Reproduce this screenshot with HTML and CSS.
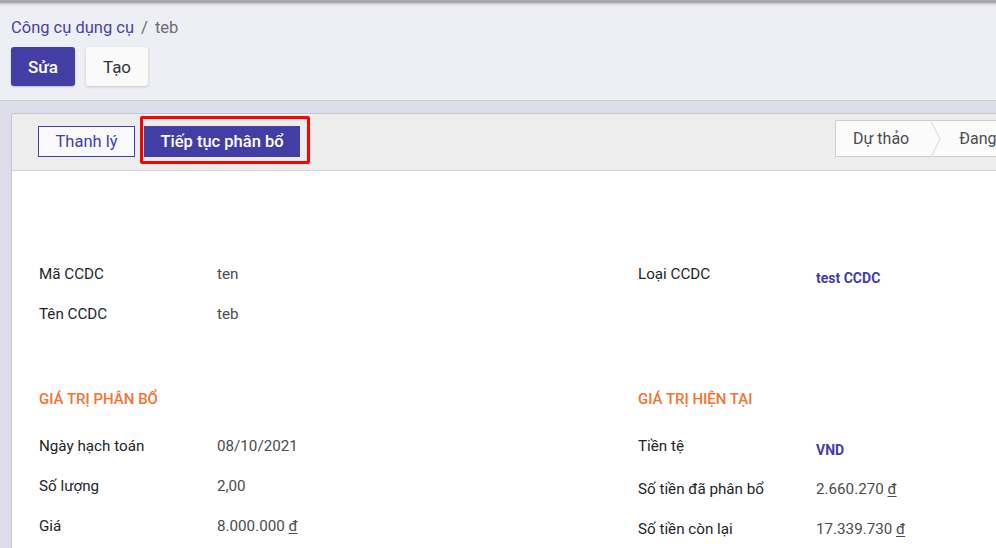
FILE: index.html
```html
<!DOCTYPE html>
<html lang="vi">
<head>
<meta charset="utf-8">
<title>Công cụ dụng cụ / teb</title>
<link rel="stylesheet" href="styles.css">
</head>
<body>
<div class="app">
  <div class="control-panel">
    <div class="breadcrumb"><a class="crumb-link">Công cụ dụng cụ</a><span class="crumb-sep">/</span><span class="crumb-active">teb</span></div>
    <div class="cp-buttons">
      <button class="btn btn-primary">Sửa</button>
      <button class="btn btn-secondary">Tạo</button>
    </div>
  </div>
  <div class="content">
    <div class="sheet">
      <div class="statusbar">
        <div class="sb-buttons">
          <button class="sb-btn sb-btn-outline">Thanh lý</button>
          <button class="sb-btn sb-btn-fill highlighted">Tiếp tục phân bổ</button>
        </div>
        <div class="sb-status">
          <span class="stage">Dự thảo</span>
          <span class="stage">Đang sử dụng</span>
          <span class="stage">Đã phân bổ xong</span>
        </div>
      </div>
      <div class="form">
        <div class="col">
          <div class="group top-group">
            <div class="row"><span class="lbl">Mã CCDC</span><span class="val">ten</span></div>
            <div class="row"><span class="lbl">Tên CCDC</span><span class="val">teb</span></div>
          </div>
          <h3 class="sec-title">Giá trị phân bổ</h3>
          <div class="group">
            <div class="row"><span class="lbl">Ngày hạch toán</span><span class="val">08/10/2021</span></div>
            <div class="row"><span class="lbl">Số lượng</span><span class="val">2,00</span></div>
            <div class="row"><span class="lbl">Giá</span><span class="val">8.000.000 <u>đ</u></span></div>
          </div>
        </div>
        <div class="col">
          <div class="group top-group">
            <div class="row"><span class="lbl">Loại CCDC</span><span class="val link">test CCDC</span></div>
            <div class="row"></div>
          </div>
          <h3 class="sec-title">Giá trị hiện tại</h3>
          <div class="group">
            <div class="row row-tall"><span class="lbl">Tiền tệ</span><span class="val link">VND</span></div>
            <div class="row"><span class="lbl">Số tiền đã phân bổ</span><span class="val">2.660.270 <u>đ</u></span></div>
            <div class="row"><span class="lbl">Số tiền còn lại</span><span class="val">17.339.730 <u>đ</u></span></div>
          </div>
        </div>
      </div>
    </div>
  </div>
</div>
</body>
</html>
```

FILE: styles.css
```css
* { box-sizing: border-box; }
html, body { margin: 0; padding: 0; }
body {
  font-family: Roboto, "Noto Sans", "Liberation Sans", sans-serif;
  background: #dcdde9;
  overflow: hidden;
  width: 996px;
  height: 548px;
}
.app { width: 996px; height: 548px; overflow: hidden; }

.control-panel {
  background: #eeeff5;
  border-top: 3px solid #a9a9ad;
  border-bottom: 1px solid #cfd0dc;
  height: 101px;
  padding: 14px 11px 0;
  position: relative;
}
.control-panel::before {
  content: "";
  position: absolute;
  left: 0; right: 0; top: 0;
  height: 3px;
  background: linear-gradient(#c6c6cb, #eeeff5);
}
.breadcrumb {
  font-size: 16.5px;
  line-height: 22px;
  color: #6c6c73;
  display: flex;
  align-items: center;
}
.crumb-link { color: #4a3f9f; }
.crumb-sep { margin: 0 7px; color: #6c6c73; }
.crumb-active { color: #6c6c73; }

.cp-buttons { display: flex; gap: 11px; margin-top: 8px; }
.btn {
  font-family: inherit;
  font-size: 17px;
  height: 39px;
  border-radius: 3px;
  border: none;
  padding: 0;
  cursor: pointer;
}
.btn-primary {
  background: #433ea6;
  color: #fff;
  font-weight: 500;
  width: 64px;
  box-shadow: 0 1px 2px rgba(0,0,0,0.2);
}
.btn-secondary {
  background: #fafafa;
  color: #333;
  width: 62px;
  box-shadow: 0 1px 3px rgba(0,0,0,0.18);
}

.content { padding: 12px 0 0 11px; }
.sheet {
  width: 1100px;
  height: 500px;
  background: #fff;
  border-left: 1px solid #c5c5cf;
  border-top: 1px solid #c5c5cf;
  border-radius: 4px 0 0 0;
  overflow: hidden;
}
.statusbar {
  background: #ededed;
  border-bottom: 1px solid #d3d3d8;
  height: 57px;
  display: grid;
  grid-template-columns: 823px auto;
  align-items: start;
}
.sb-buttons {
  display: flex;
  align-items: center;
  padding-left: 26px;
  margin-top: 12px;
  gap: 9px;
}
.sb-btn {
  font-family: inherit;
  font-size: 16.5px;
  height: 31px;
  border-radius: 0;
  cursor: pointer;
}
.sb-btn-outline {
  background: #f9f9fb;
  border: 1px solid #433ea6;
  color: #433ea6;
  width: 97px;
  padding: 0;
}
.sb-btn-fill {
  background: #433ea6;
  border: 1px solid #433ea6;
  color: #fff;
  font-weight: 500;
  width: 156px;
  padding: 0;
}
.highlighted { position: relative; }
.highlighted::after {
  content: "";
  position: absolute;
  left: -5px; top: -11px; right: -11px; bottom: -8px;
  border: 3px solid #f00;
  border-radius: 2px;
  pointer-events: none;
}

.sb-status {
  display: flex;
  align-items: stretch;
  height: 37px;
  margin-top: 6px;
  background: #fbfbfb;
  border: 1px solid #cfcfcf;
  font-size: 16px;
  color: #4c4c4c;
  white-space: nowrap;
}
.stage {
  display: flex;
  align-items: center;
  padding: 0 26px 0 17px;
  position: relative;
}
.stage + .stage { padding-left: 24px; }
.stage:not(:last-child)::after {
  content: "";
  position: absolute;
  right: -9px;
  top: 50%;
  width: 24px;
  height: 24px;
  transform: translateY(-50%) scaleX(0.5) rotate(45deg);
  border-top: 1px solid #c9c9c9;
  border-right: 1px solid #c9c9c9;
  background: #fbfbfb;
  z-index: 1;
}

.form {
  display: grid;
  grid-template-columns: 599px 599px;
  padding: 0 0 0 27px;
}
.group { display: flex; flex-direction: column; }
.top-group { padding-top: 83px; }
.row {
  display: grid;
  grid-template-columns: 178px 1fr;
  height: 40px;
  align-items: center;
  font-size: 15.2px;
}
.row-tall { height: 43px; }
.lbl { color: #212529; }
.val { color: #4c4c4c; }
.val.link { color: #433ea6; font-weight: 700; font-size: 14px; padding-top: 7px; }
.row-tall .lbl { margin-top: -4px; }
.row-tall .val.link { padding-top: 4px; }
.val u { text-decoration: underline; text-underline-offset: 2px; }
.sec-title {
  margin: 55px 0 17px;
  height: 20px;
  line-height: 20px;
  font-size: 15px;
  font-weight: 500;
  color: #f27330;
  text-transform: uppercase;
}
```
